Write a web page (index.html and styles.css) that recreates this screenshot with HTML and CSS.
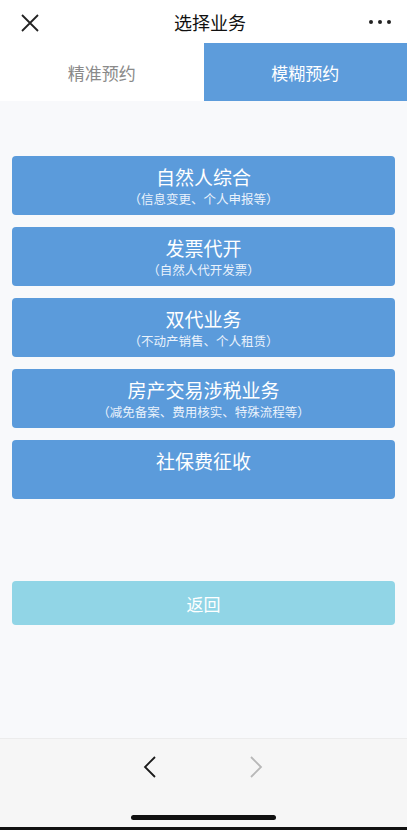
FILE: index.html
```html
<!DOCTYPE html>
<html lang="zh-CN">
<head>
  <meta charset="UTF-8" />
  <meta name="viewport" content="width=device-width, initial-scale=1.0" />
  <title>选择业务</title>
  <link rel="stylesheet" href="styles.css">
</head>
<body>
  <div class="app">
    <header class="topbar">
      <svg class="close" width="18" height="18" viewBox="0 0 18 18">
        <path d="M1 1 L17 17 M17 1 L1 17" stroke="#222" stroke-width="1.8" fill="none" />
      </svg>
      <div class="title">选择业务</div>
      <div class="more"><i></i><i></i><i></i></div>
    </header>

    <nav class="tabs">
      <div class="tab">精准预约</div>
      <div class="tab active">模糊预约</div>
    </nav>

    <main class="content">
      <div class="list">
        <button class="item">
          <span class="name">自然人综合</span>
          <span class="sub">（信息变更、个人申报等）</span>
        </button>
        <button class="item">
          <span class="name">发票代开</span>
          <span class="sub">（自然人代开发票）</span>
        </button>
        <button class="item">
          <span class="name">双代业务</span>
          <span class="sub">（不动产销售、个人租赁）</span>
        </button>
        <button class="item">
          <span class="name">房产交易涉税业务</span>
          <span class="sub">（减免备案、费用核实、特殊流程等）</span>
        </button>
        <button class="item single">
          <span class="name">社保费征收</span>
        </button>
      </div>

      <button class="back">返回</button>
    </main>

    <footer class="toolbar">
      <div class="arrows">
        <svg width="14" height="22" viewBox="0 0 14 22">
          <path d="M12 1 L2 11 L12 21" stroke="#1a1a1a" stroke-width="1.8" fill="none" />
        </svg>
        <svg width="14" height="22" viewBox="0 0 14 22">
          <path d="M2 1 L12 11 L2 21" stroke="#b8b8b8" stroke-width="1.8" fill="none" />
        </svg>
      </div>
      <div class="home"></div>
    </footer>
  </div>
</body>
</html>
```

FILE: styles.css
```css
* {
  box-sizing: border-box;
}
body {
  margin: 0;
  font-family: "Noto Sans CJK SC", "Noto Sans", sans-serif;
  background: #f8f9fb;
}
.app {
  height: 830px;
  display: flex;
  flex-direction: column;
  border-bottom: 3px solid #111;
}
.topbar {
  height: 43px;
  background: #fff;
  display: flex;
  align-items: center;
  justify-content: space-between;
  padding: 0 16px 0 21px;
}
.close {
  margin-top: 2px;
}
.title {
  font-size: 18px;
  color: #111;
  margin-left: 12px;
}
.more {
  display: flex;
  gap: 5px;
  width: 22px;
}
.more i {
  width: 4px;
  height: 4px;
  border-radius: 50%;
  background: #222;
}
.tabs {
  display: flex;
  height: 58px;
  background: #fff;
}
.tab {
  flex: 1;
  display: flex;
  align-items: center;
  justify-content: center;
  font-size: 17px;
  color: #8a8a8a;
}
.tab.active {
  background: #5d9cdb;
  color: #fff;
}
.content {
  flex: 1;
  padding: 55px 12px 0;
}
.list {
  display: flex;
  flex-direction: column;
  gap: 12px;
}
.item {
  height: 59px;
  border: none;
  border-radius: 4px;
  background: #5b9bdb;
  color: #fff;
  font-family: inherit;
  display: flex;
  flex-direction: column;
  align-items: center;
  justify-content: flex-start;
  padding: 9px 0 0;
}
.item .name {
  font-size: 19px;
  line-height: 24px;
}
.item .sub {
  font-size: 12.5px;
  line-height: 20px;
  color: #eaf2fb;
}
.back {
  display: block;
  width: 100%;
  height: 44px;
  margin-top: 82px;
  border: none;
  border-radius: 4px;
  background: #91d5e6;
  color: #fff;
  font-family: inherit;
  font-size: 17px;
}
.toolbar {
  height: 89px;
  background: #f6f6f6;
  border-top: 1px solid #ececec;
  display: flex;
  flex-direction: column;
  align-items: center;
}
.arrows {
  display: flex;
  gap: 92px;
  margin-top: 17px;
  margin-right: 2px;
}
.home {
  width: 145px;
  height: 5px;
  border-radius: 3px;
  background: #111;
  margin-top: 37px;
}
```
